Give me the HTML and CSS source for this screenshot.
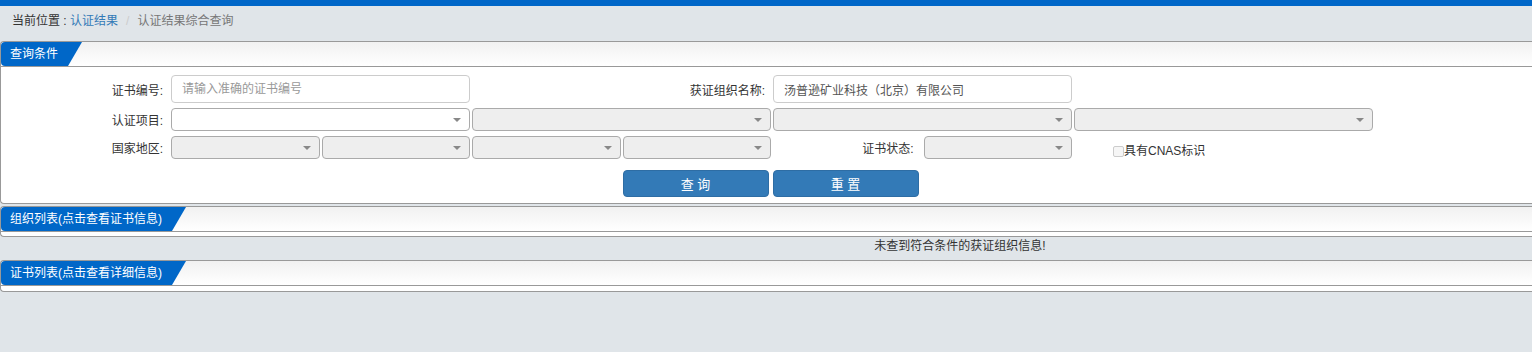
FILE: index.html
```html
<!DOCTYPE html>
<html lang="zh-CN">
<head>
    <meta charset="UTF-8">
    <title>认证结果综合查询</title>
    <link rel="stylesheet" href="styles.css">
</head>
<body>
    <div class="topbar"></div>
    <div class="breadcrumb">
        当前位置 : <a href="#">认证结果</a><span class="sep">/</span><span class="current">认证结果综合查询</span>
    </div>

    <div class="panel">
        <div class="panel-head"><span class="tab">查询条件</span></div>
        <div class="query-form">
            <label class="lbl">证书编号:</label>
            <div class="field span-2"><input class="text-input" type="text" placeholder="请输入准确的证书编号"></div>
            <label class="lbl span-2">获证组织名称:</label>
            <div class="field span-2"><input class="text-input" type="text" value="汤普逊矿业科技（北京）有限公司"></div>
            <div class="span-2"></div>

            <label class="lbl">认证项目:</label>
            <div class="field span-2"><div class="select"></div></div>
            <div class="field span-2"><div class="select disabled"></div></div>
            <div class="field span-2"><div class="select disabled"></div></div>
            <div class="field span-2"><div class="select disabled"></div></div>

            <label class="lbl">国家地区:</label>
            <div class="field"><div class="select disabled"></div></div>
            <div class="field"><div class="select disabled"></div></div>
            <div class="field"><div class="select disabled"></div></div>
            <div class="field"><div class="select disabled"></div></div>
            <label class="lbl status-lbl">证书状态:</label>
            <div class="field"><div class="select disabled"></div></div>
            <div class="cnas"><span class="checkbox"></span>具有CNAS标识</div>
            <div></div>

            <div class="btn-row">
                <button class="btn" type="button">查 询</button>
                <button class="btn" type="button">重 置</button>
            </div>
        </div>
    </div>

    <div class="panel">
        <div class="panel-head"><span class="tab">组织列表(点击查看证书信息)</span></div>
        <div class="panel-body"></div>
    </div>
    <div class="empty-msg">未查到符合条件的获证组织信息!</div>

    <div class="panel">
        <div class="panel-head"><span class="tab">证书列表(点击查看详细信息)</span></div>
        <div class="panel-body last"></div>
    </div>
</body>
</html>
```

FILE: styles.css
```css
:root {
    --blue: #0067c8;
    --btn-blue: #337ab7;
    --bg: #e0e5e9;
    --line: #999;
    --text: #333;
}

body {
    margin: 0;
    background-color: var(--bg);
    font-family: "Liberation Sans", "Noto Sans CJK SC", sans-serif;
    font-size: 12px;
    color: var(--text);
}

.topbar {
    height: 6px;
    background-color: var(--blue);
}

.breadcrumb {
    height: 35px;
    line-height: 30px;
    padding-left: 12px;
}

.breadcrumb a {
    color: var(--btn-blue);
    text-decoration: none;
}

.breadcrumb .sep {
    color: #ccc;
    margin: 0 8px;
}

.breadcrumb .current {
    color: #777;
}

/* panels run on past the right edge of the window */
.panel {
    background-color: #fff;
    border: 1px solid var(--line);
    border-right: none;
    border-radius: 4px 0 0 4px;
    margin-top: 2px;
}

.breadcrumb + .panel,
.empty-msg + .panel {
    margin-top: 0;
}

.panel-head {
    height: 24px;
    border-bottom: 1px solid var(--line);
    background: linear-gradient(#f1f1f1, #fff);
    border-radius: 4px 0 0 0;
}

.tab {
    display: inline-block;
    height: 24px;
    line-height: 24px;
    padding: 0 24px 0 9px;
    background-color: var(--blue);
    color: #fff;
    border-radius: 4px 0 0 4px;
    clip-path: polygon(0 0, 100% 0, calc(100% - 14px) 100%, 0 100%);
}

.panel-body {
    height: 4px;
}

.panel-body.last {
    height: 5px;
}

/* query form grid */
.query-form {
    display: grid;
    grid-template-columns: 170px repeat(8, 150.5px);
    row-gap: 5px;
    padding: 8px 0 6px;
}

.span-2 {
    grid-column: span 2;
}

.lbl {
    text-align: right;
    padding-right: 8px;
    align-self: center;
    white-space: nowrap;
}

.status-lbl {
    padding-right: 10px;
}

.field {
    padding-right: 2px;
}

.text-input {
    display: block;
    box-sizing: border-box;
    width: 100%;
    height: 28px;
    border: 1px solid #ccc;
    border-radius: 4px;
    padding: 0 10px;
    font-family: inherit;
    font-size: 12px;
    color: #555;
    outline: none;
}

.text-input::placeholder {
    color: #999;
}

.select {
    position: relative;
    box-sizing: border-box;
    height: 23px;
    border: 1px solid #aaa;
    border-radius: 4px;
    background-color: #fff;
}

.select.disabled {
    background-color: #eee;
}

.select::after {
    content: "";
    position: absolute;
    right: 8px;
    top: 9px;
    border-left: 4px solid transparent;
    border-right: 4px solid transparent;
    border-top: 4px solid #888;
}

.cnas {
    display: flex;
    align-items: center;
    padding: 7px 0 0 39px;
    line-height: 16px;
    white-space: nowrap;
}

.checkbox {
    box-sizing: border-box;
    width: 11px;
    height: 11px;
    border: 1px solid #ccc;
    border-radius: 2px;
    background-color: #f6f6f6;
}

.btn-row {
    grid-column: 5 / span 2;
    display: flex;
    gap: 4px;
    margin-top: 6px;
}

.btn {
    width: 146px;
    height: 27px;
    background-color: var(--btn-blue);
    border: 1px solid #2e6da4;
    border-radius: 4px;
    color: #fff;
    font-family: inherit;
    font-size: 13px;
    padding: 0;
    cursor: pointer;
}

.empty-msg {
    height: 23px;
    line-height: 18px;
    padding-left: 388px;
    text-align: center;
}
```
